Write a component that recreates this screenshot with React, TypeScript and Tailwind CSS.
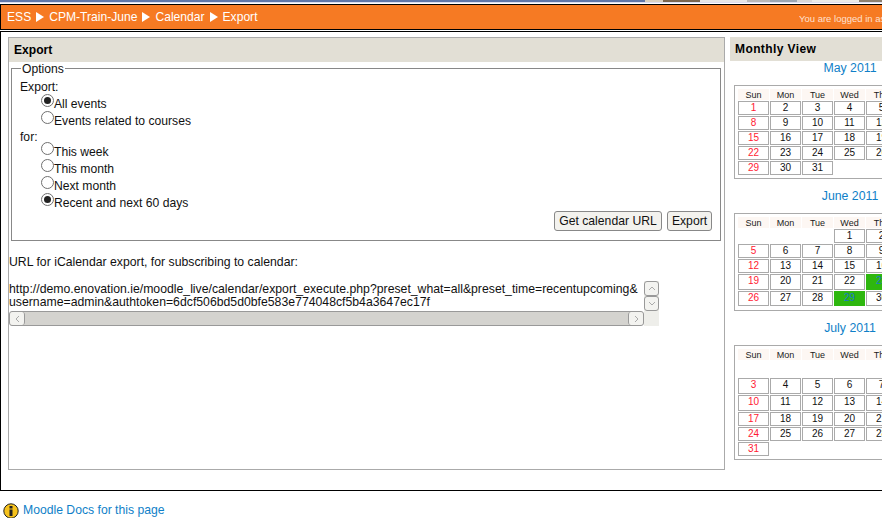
const F = "font-['Liberation_Sans',Arial,sans-serif]";

const months = [
  { name: "May 2011", rows: [[1,2,3,4,5],[8,9,10,11,12],[15,16,17,18,19],[22,23,24,25,26],[29,30,31,0,0]], h: [14,14,14,14,14], top: "mt-0", pb: "pb-[3px]" },
  { name: "June 2011", rows: [[0,0,0,1,2],[5,6,7,8,9],[12,13,14,15,16],[19,20,21,22,23],[26,27,28,29,30]], h: [14,14,14,16,15], top: "mt-[10px]", pb: "pb-[4px]" },
  { name: "July 2011", rows: [[0,0,0,0,0],[3,4,5,6,7],[10,11,12,13,14],[17,18,19,20,21],[24,25,26,27,28],[31,0,0,0,0]], h: [16,16,16,14,14,14], top: "mt-[10px]", pb: "pb-[3px]" },
];

function Radio({ on, label }: { on?: boolean; label: string }) {
  return (
    <div className="flex h-[17px] items-start pl-[21px]">
      <span className="mt-[-3px] flex h-[13px] w-[13px] shrink-0 items-center justify-center rounded-full border border-[#707070] bg-white">
        {on && <span className="h-[7px] w-[7px] rounded-full bg-[#222]" />}
      </span>
      <span className="leading-[14px]">{label}</span>
    </div>
  );
}

function Arrow() {
  return (
    <svg className="mx-[5px] inline-block align-[-1px]" width="8" height="10" viewBox="0 0 8 10">
      <path d="M0 0 L8 5 L0 10 Z" fill="#fff" />
    </svg>
  );
}

function Month({ m }: { m: typeof months[number] }) {
  const heads = ["Sun", "Mon", "Tue", "Wed", "Thu"];
  return (
    <div className={m.top}>
      <div className="ml-[45px] h-[15px] w-[150px] text-center text-[12.3px] leading-[15px] text-[#0f7fc8]">{m.name}</div>
      <div className={"ml-[4px] mt-[9px] w-[200px] border border-[#aaa] pl-[3px] pt-[3px] " + m.pb}>
        <div className="flex gap-[1px]">
          {heads.map((d) => (
            <div key={d} className="h-[11px] w-[31px] shrink-0 bg-[#fdf7f3] text-center text-[9px] leading-[13px] text-[#222]">{d}</div>
          ))}
        </div>
        {m.rows.map((r, i) => (
          <div key={i} className="mt-[1px] flex gap-[1px]">
            {r.map((n, j) => {
              const today = m.name === "June 2011" && (n === 29 || n === 23);
              return (
                <div
                  key={j}
                  style={{ height: m.h[i] }}
                  className={
                    "w-[31px] shrink-0 text-center text-[10px] leading-[12px] " +
                    (n ? "border " : "") +
                    (today ? "border-[#2eb70f] bg-[#2eb70f] text-[#1a78c8] " : n ? "border-[#aaa] " : "") +
                    (!today && j === 0 ? "text-[#ff1a33]" : !today ? "text-[#111]" : "")
                  }
                >
                  {n || ""}
                </div>
              );
            })}
          </div>
        ))}
      </div>
    </div>
  );
}

export default function App() {
  return (
    <div className={F + " relative h-[518px] w-[882px] overflow-hidden bg-white text-[12.15px] text-[#111]"}>
      <div className="flex h-[3px] w-full border-b border-[#dde]">
        <div className="w-[645px] bg-[#5f76a8]" />
        <div className="w-[18px] bg-[#d8d0c0]" />
        <div className="w-[37px] bg-[#7a6650]" />
        <div className="w-[47px] bg-[#e6e6e6]" />
        <div className="w-[23px] bg-[#b8b8b8]" />
        <div className="w-[27px] bg-[#9aa6b4]" />
        <div className="w-[15px] bg-[#d8d8d8]" />
        <div className="w-[47px] bg-[#ebebe8]" />
        <div className="flex-1 bg-[#8c8070]" />
      </div>
      <div className="h-[1px] bg-white" />
      <div className="h-[1px] bg-black" />
      <div className="flex h-[24px] items-center justify-between border-l border-black bg-[#f67a23] pl-[6px] pt-[1px] text-white">
        <div className="whitespace-nowrap text-[12.1px]">ESS<Arrow />CPM-Train-June<Arrow />Calendar<Arrow />Export</div>
        <div className="w-[83px] shrink-0 overflow-hidden whitespace-nowrap pt-[4px] text-[9.5px] text-[#ffe0d0]">You are logged in as Admin</div>
      </div>
      <div className="h-[1px] bg-black" />
      <div className="h-[1px] bg-white" />
      <div className="flex h-[460px] items-start border-b border-l border-t border-black pl-[7px] pt-[5px]">
        <div className="h-[433px] w-[717px] shrink-0 border border-[#aaa]">
          <div className="flex h-[24px] items-center bg-[#e2dfd5] pl-[5px] text-[12.1px] font-bold text-black">Export</div>
          <fieldset className="ml-[2px] h-[179px] w-[710px] border border-[#888] pl-[8px] pr-[8px]">
            <legend className="ml-[1px] px-[1px] text-[12.15px] leading-[12px]"><span className="inline-block translate-y-[1px]">Options</span></legend>
            <div className="mt-[6px] h-[17px] leading-[14px]">Export:</div>
            <Radio on label="All events" />
            <Radio label="Events related to courses" />
            <div className="h-[14px] leading-[12px]">for:</div>
            <Radio label="This week" />
            <Radio label="This month" />
            <Radio label="Next month" />
            <Radio on label="Recent and next 60 days" />
            <div className="mt-[-2px] flex justify-end gap-[5px]">
              <button className="h-[20px] w-[108px] rounded-[3px] border border-[#888] bg-[#f3f2ee] text-[12.2px] text-[#111]">Get calendar URL</button>
              <button className="h-[20px] w-[45px] rounded-[3px] border border-[#888] bg-[#f3f2ee] text-[12.2px] text-[#111]">Export</button>
            </div>
          </fieldset>
          <div className="mt-[15px] h-[14px] text-[12.25px] leading-[13px]">URL for iCalendar export, for subscribing to calendar:</div>
          <div className="mt-[11px] w-[650px]">
            <div className="flex">
              <div className="h-[30px] w-[635px] whitespace-nowrap pt-[2px] text-[12.25px] leading-[13px]">
                <div>http://demo.enovation.ie/moodle_live/calendar/export_execute.php?preset_what=all&amp;preset_time=recentupcoming&amp;</div>
                <div>username=admin&amp;authtoken=6dcf506bd5d0bfe583e774048cf5b4a3647ec17f</div>
              </div>
              <div className="flex w-[15px] flex-col bg-[#eeeeea]">
                <div className="flex h-[15px] items-center justify-center rounded-[3px] border border-[#999] bg-[#f3f3f0]">
                  <svg width="8" height="5" viewBox="0 0 8 5"><path d="M1 4 L4 1 L7 4" fill="none" stroke="#aaa" /></svg>
                </div>
                <div className="flex h-[15px] items-center justify-center rounded-[3px] border border-[#999] bg-[#f3f3f0]">
                  <svg width="8" height="5" viewBox="0 0 8 5"><path d="M1 1 L4 4 L7 1" fill="none" stroke="#aaa" /></svg>
                </div>
              </div>
            </div>
            <div className="flex h-[15px]">
              <div className="flex h-[15px] w-[635px] items-center justify-between rounded-[3px] border border-[#999] bg-[#d4d3cf]">
                <div className="flex h-[13px] w-[15px] items-center justify-center rounded-[3px] border-r border-[#999] bg-[#f3f3f0]">
                  <svg width="5" height="8" viewBox="0 0 5 8"><path d="M4 1 L1 4 L4 7" fill="none" stroke="#aaa" /></svg>
                </div>
                <div className="flex h-[13px] w-[15px] items-center justify-center rounded-[3px] border-l border-[#999] bg-[#f3f3f0]">
                  <svg width="5" height="8" viewBox="0 0 5 8"><path d="M1 1 L4 4 L1 7" fill="none" stroke="#aaa" /></svg>
                </div>
              </div>
              <div className="w-[15px] bg-[#eeeeea]" />
            </div>
          </div>
        </div>
        <div className="ml-[5px] w-[200px] shrink-0">
          <div className="flex h-[24px] items-center bg-[#e2dfd5] pl-[5px] text-[12px] font-bold tracking-[0.4px] text-black">Monthly View</div>
          {months.map((m) => <Month key={m.name} m={m} />)}
        </div>
      </div>
      <div className="flex items-start pl-[3px] pt-[12px]">
        <svg width="16" height="16" viewBox="0 0 16 16">
          <circle cx="8" cy="8" r="7.2" fill="#f6c21c" stroke="#222" />
          <rect x="6.5" y="3" width="3" height="2.5" fill="#222" />
          <rect x="6.5" y="6.5" width="3" height="6.5" fill="#222" />
        </svg>
        <span className="ml-[4px] text-[12.2px] leading-[14px] text-[#0f7fc8]">Moodle Docs for this page</span>
      </div>
    </div>
  );
}
